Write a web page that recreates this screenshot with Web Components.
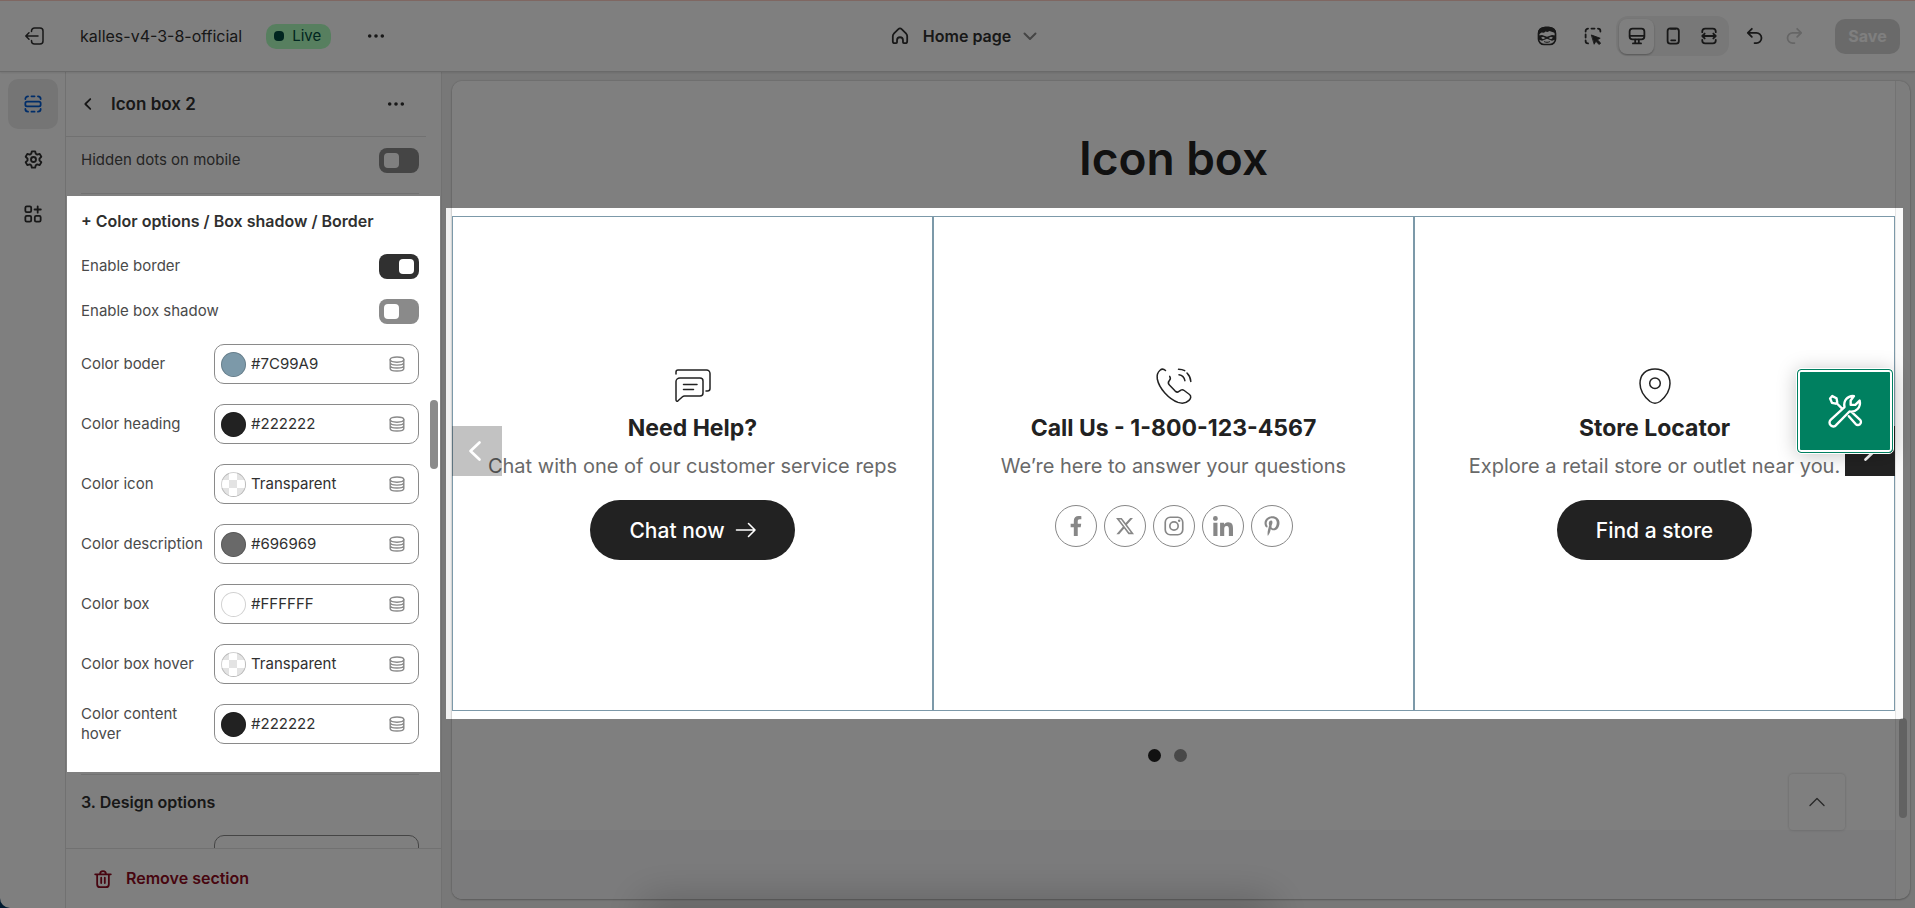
<!DOCTYPE html>
<html lang="en">
<head>
<meta charset="utf-8">
<meta name="viewport" content="width=device-width, initial-scale=1">
<title>Theme editor</title>
<style>
    body {
        margin: 0;
        background-color: #003560;
        font-family: Inter, "Liberation Sans", sans-serif;
        color: #303030;
    }
</style>
</head>
<body>

<editor-shell>
    <editor-topbar slot="top" theme="kalles-v4-3-8-official" page="Home page"></editor-topbar>
    <nav-rail slot="rail"></nav-rail>
    <settings-panel slot="side" heading="Icon box 2">
        <settings-group>
            <toggle-field label="Hidden dots on mobile"></toggle-field>
        </settings-group>
        <settings-group class="lit" heading="+ Color options / Box shadow / Border">
            <toggle-field label="Enable border" checked></toggle-field>
            <toggle-field label="Enable box shadow"></toggle-field>
            <color-field label="Color boder" value="#7C99A9"></color-field>
            <color-field label="Color heading" value="#222222"></color-field>
            <color-field label="Color icon" value="Transparent"></color-field>
            <color-field label="Color description" value="#696969"></color-field>
            <color-field label="Color box" value="#FFFFFF"></color-field>
            <color-field label="Color box hover" value="Transparent"></color-field>
            <color-field label="Color content hover" value="#222222"></color-field>
        </settings-group>
        <settings-group heading="3. Design options">
            <select-field></select-field>
        </settings-group>
    </settings-panel>
    <store-preview slot="main" heading="Icon box">
        <icon-slider class="lit" data-pad="8 8 8 6">
            <icon-card icon="chat" heading="Need Help?" text="Chat with one of our customer service reps">
                <pill-link arrow>Chat now</pill-link>
            </icon-card>
            <icon-card icon="phone" heading="Call Us - 1-800-123-4567" text="We’re here to answer your questions">
                <social-links></social-links>
            </icon-card>
            <icon-card icon="pin" heading="Store Locator" text="Explore a retail store or outlet near you.">
                <pill-link>Find a store</pill-link>
            </icon-card>
        </icon-slider>
    </store-preview>
</editor-shell>
<spot-scrim targets=".lit"></spot-scrim>

<script>
// [viewBox, markup]
const ICONS = {
    exit: ['0 0 20 20', '<path d="M6.5 5.5V5a3 3 0 0 1 3-3H15a3 3 0 0 1 3 3v10a3 3 0 0 1-3 3H9.500a3 3 0 0 1-3-3v-.5M13 10H.9M4 6.700.8 10 4 13.300"/>'],
    dots: ['0 0 20 20', '<g fill="currentColor" stroke="none"><circle cx="3" cy="10" r="2"/><circle cx="10" cy="10" r="2"/><circle cx="17" cy="10" r="2"/></g>'],
    home: ['0 0 20 20', '<path d="M2 10.200c0-1.200.5-2.300 1.400-3.200l4.500-4.400a3 3 0 0 1 4.200 0l4.500 4.400c.9.900 1.400 2 1.400 3.200v5.500a2.300 2.300 0 0 1-2.300 2.300h-1.400a1 1 0 0 1-1-1v-2.300a3.300 3.300 0 0 0-6.600 0v2.300a1 1 0 0 1-1 1H4.300A2.300 2.300 0 0 1 2 15.700z"/>'],
    down: ['0 0 20 20', '<path d="m4.500 7.500 5.500 5.500 5.500-5.500"/>'],
    up: ['0 0 20 20', '<path d="m3 13.500 7-7 7 7"/>'],
    left: ['0 0 20 20', '<path d="M12.500 4.500 7 10l5.500 5.500"/>'],
    hero: ['0 0 20 20', '<rect x="1.500" y="2" width="17" height="16.500" rx="5.500"/><path fill="currentColor" stroke="none" d="M1 9.500V6.500C1 2.500 5 .5 10 .5s9 2 9 6v3l-1.500-2.800L12.500 5l-2 1-2-.5-1.500 1.300-2.500-.3L2.500 8z"/><path fill="currentColor" fill-rule="evenodd" stroke="none" d="M1.500 9.500 5 9l5 1.700L15 9l3.500.5v4L15 14.800l-5-2-5 2-3.500-1.300zM4 11.800l2 1.500 2.500-1.300L6 10.700zM16 11.800l-2 1.500-2.500-1.300L14 10.700z"/><path stroke-width="1" d="M7.500 15.800c1.500.7 3.500.7 5 0"/>'],
    pick: ['0 0 20 20', '<path d="M1.800 5V4.500A2.700 2.700 0 0 1 4.500 1.800M8.300 1.800h3.400M15.500 1.800a2.700 2.700 0 0 1 2.700 2.700V5M1.800 8.300v3.400M1.800 15v.5a2.700 2.700 0 0 0 2.700 2.700"/><path fill="currentColor" stroke-width="1" d="m8.500 9 9.500 3.500-3.200 1.700 3.700 3.600-1.700 1.700-3.600-3.700-1.700 3z"/>'],
    desktop: ['0 0 20 20', '<rect x="1.800" y="1.800" width="16.400" height="12" rx="3.200"/><path d="M2 9.900h16M8 14v4M12 14v4M5.500 18.200h9"/>'],
    mobile: ['0 0 20 20', '<rect x="4" y="1.500" width="12.500" height="17" rx="3"/><path d="M7.500 2h5.500M8 14.800h4.500"/>'],
    wide: ['0 0 20 20', '<path d="M2.500 5.800V5a3.200 3.200 0 0 1 3.200-3.200h8.600A3.200 3.200 0 0 1 17.500 5v.8M2.500 14.200v.8a3.200 3.200 0 0 0 3.200 3.200h8.600a3.200 3.200 0 0 0 3.200-3.200v-.8M2.500 10h15M5.200 7.300 2.500 10l2.700 2.700M14.800 7.300 17.500 10l-2.700 2.700"/>'],
    undo: ['0 0 20 20', '<path d="M6.500 2 2 6.500 6.500 11M2.300 6.500h9.200a5.700 5.700 0 0 1 0 11.400H9.500"/>'],
    redo: ['0 0 20 20', '<path d="M13.500 2 18 6.500 13.500 11M17.700 6.500H8.500a5.700 5.700 0 0 0 0 11.400h2"/>'],
    sections: ['0 0 20 20', '<rect x="1.500" y="7.300" width="17" height="5.400" rx="1.800"/><path d="M1.500 4.500a3 3 0 0 1 3-3M8.300 1.500h3.400M15.500 1.500a3 3 0 0 1 3 3M1.500 15.500a3 3 0 0 0 3 3M8.300 18.500h3.400M15.500 18.500a3 3 0 0 0 3-3"/>'],
    gear: ['0 0 20 20', '<circle cx="10" cy="10" r="2.600"/><path d="M8.300 1.400h3.400l.7 2.600 1.500.9 2.600-.8 1.700 3-1.900 1.900v2l1.900 1.900-1.700 3-2.600-.8-1.500.9-.7 2.600H8.300l-.7-2.600-1.500-.9-2.600.8-1.700-3L3.700 11V9L1.800 7.100l1.700-3 2.600.8L7.600 4z"/>'],
    apps: ['0 0 20 20', '<rect x="1.500" y="1.500" width="6.500" height="6.500" rx="1.500"/><rect x="1.500" y="12" width="6.500" height="6.500" rx="1.500"/><rect x="12" y="12" width="6.500" height="6.500" rx="1.500"/><path d="M15.200 1.500v7M11.700 5h7"/>'],
    stack: ['0 0 20 20', '<ellipse cx="10" cy="4.500" rx="8.500" ry="3.200"/><path d="M1.500 4.500v11c0 1.800 3.800 3.200 8.500 3.200s8.500-1.400 8.500-3.200v-11M1.500 8.200c0 1.800 3.800 3.200 8.500 3.200s8.500-1.400 8.500-3.200M1.500 11.900c0 1.800 3.800 3.200 8.500 3.200s8.500-1.400 8.500-3.200"/>'],
    trash: ['0 0 20 20', '<path d="M1.300 4.800h17.400M6.800 4.500a3.200 3.200 0 0 1 6.400 0M3.500 5v10.700a3.300 3.300 0 0 0 3.300 3.300h6.400a3.300 3.300 0 0 0 3.300-3.300V5M8 8.500v6M12 8.500v6"/>'],
    chat: ['0 0 36 36', '<path d="M1 6V4a2 2 0 0 1 2-2h28.500A3.500 3.500 0 0 1 35 5.500v15a2.500 2.500 0 0 1-2.500 2.500H31M5 10h20a3 3 0 0 1 3 3v12a3 3 0 0 1-3 3H9.500a3 3 0 0 0-2 .8L3 32.800c-1 .8-2 .3-2-1V13.500C1 11.500 2.800 10 5 10zM8.500 16.500h13.500M8.500 21.500h10"/>'],
    phone: ['0 0 36 36', '<path d="M9.500 2.500C7.800.9 5.600.8 4 2.300 1.500 4.500.7 7.500 1.300 11c1.800 9.500 11.500 20 20.700 23.400 3.800 1.300 8 .9 11-2 2-2 2.400-4.300.5-5.900l-5.300-4c-1.600-1.200-3.300-.8-4.700.6-1.400 1.500-2.900 1.300-4.300 0l-5.800-6c-1.400-1.500-1.500-2.800-.2-4.300 1.300-1.300 1.500-2.900.5-4.400M22.500 1.200c2.400 0 4.400.4 6.200 1.500M31 5c2.400 2.500 3.700 5.500 3.800 8.500M23 6.800c3.200.5 5.300 2.600 5.900 5.900"/>'],
    pin: ['0 0 36 36', '<path d="M18 1C9 1 3 6.500 3 15.500c0 6 4.200 13.200 10 18 3 2 7 2 10 0 5.800-4.800 10-12 10-18C33 6.500 27 1 18 1z"/><circle cx="18" cy="15.200" r="5.300"/>'],
    tools: ['0 0 36 36', '<path d="M2.200 4.800 4.500 2.200 9 4.500l.8 4.200-1.600 1.600-4-1zM9 9.500l6.200 6.200M22 23.500l7.300 8.300a3.500 3.500 0 0 0 4.500.2 3.300 3.300 0 0 0 .2-4.700l-8.300-7.500M2.800 27.500l14.700-13.600C16 7.500 20.500 1.600 27.500 2.200L24 6.800v4.700h4.900L33.500 7c1.800 7-4 12.800-10.800 11.500L8.500 33a3.700 3.700 0 0 1-5.500.3 3.900 3.900 0 0 1-.2-5.800z"/>'],
    arrow: ['0 0 20 20', '<path d="M.5 10h18.500M12.500 3.500 19 10l-6.500 6.500"/>'],
    prev: ['0 0 20 20', '<path d="M15 .5 5 10l10 9.500"/>'],
    next: ['0 0 20 20', '<path d="M5 .5 15 10 5 19.500"/>'],
    facebook: ['0 0 320 512', '<path d="M279.140 288l14.220-92.660h-88.910v-60.130c0-25.350 12.420-50.060 52.240-50.060h40.420V6.260S260.430 0 225.360 0c-73.220 0-121.080 44.380-121.080 124.720v70.620H22.890V288h81.390v224h100.170V288z"/>'],
    x: ['0 0 24 24', '<path d="M18.244 2.250h3.308l-7.227 8.260 8.502 11.240H16.170l-5.214-6.817L4.990 21.750H1.680l7.730-8.835L1.254 2.250H8.080l4.713 6.231zm-1.161 17.520h1.833L7.084 4.126H5.117z"/>'],
    instagram: ['0 0 24 24', '<g fill="none" stroke="currentColor" stroke-width="2"><rect x="1.500" y="1.500" width="21" height="21" rx="6"/><circle cx="12" cy="12" r="5"/></g><circle cx="18.200" cy="5.800" r="1.500"/>'],
    linkedin: ['0 0 448 448', '<path d="M100.280 448H7.400V148.900h92.880zM53.790 108.100C24.090 108.100 0 83.500 0 53.800a53.790 53.790 0 0 1 107.580 0c0 29.700-24.100 54.300-53.790 54.300zM447.900 448h-92.680V302.400c0-34.700-.7-79.200-48.290-79.200-48.290 0-55.690 37.700-55.690 76.700V448h-92.780V148.900h89.080v40.800h1.300c12.400-23.500 42.690-48.300 87.880-48.300 94 0 111.280 61.900 111.280 142.300V448z"/>'],
    pinterest: ['0 0 384 512', '<path d="M204 6.500C101.400 6.500 0 74.900 0 185.600 0 256 39.600 296 63.600 296c9.900 0 15.600-27.600 15.600-35.400 0-9.300-23.700-29.100-23.700-67.800 0-80.400 61.200-137.400 140.400-137.400 68.100 0 118.500 38.700 118.500 109.800 0 53.100-21.300 152.700-90.300 152.700-24.900 0-46.200-18-46.200-43.800 0-37.800 26.400-74.400 26.400-113.400 0-66.200-93.900-54.200-93.900 25.800 0 16.800 2.100 35.400 9.600 50.700-13.800 59.400-42 147.900-42 209.100 0 18.900 2.700 37.500 4.500 56.400 3.400 3.800 1.700 3.400 6.900 1.500 50.400-69 48.600-82.500 71.400-172.800 12.300 23.400 44.100 36 69.300 36 106.200 0 153.900-103.500 153.900-196.800C384 71.300 298.200 6.500 204 6.500z"/>']
};

class UiIcon extends HTMLElement {
    constructor() {
        super();
        this.attachShadow({ mode: 'open' });
    }
    connectedCallback() {
        const [box, markup] = ICONS[this.getAttribute('name')];
        this.shadowRoot.innerHTML = `
        <style>
            :host {
                display: block;
                flex: none;
                width: var(--size, 18px);
                height: var(--size, 18px);
            }
            svg {
                display: block;
                width: 100%;
                height: 100%;
                overflow: visible;
                fill: none;
                stroke: currentColor;
                stroke-width: var(--stroke, 2);
                stroke-linecap: round;
                stroke-linejoin: round;
            }
            :host([solid]) svg {
                fill: currentColor;
                stroke: none;
            }
        </style>
        <svg viewBox="${box}" aria-hidden="true">${markup}</svg>`;
    }
}
customElements.define('ui-icon', UiIcon);

class EditorShell extends HTMLElement {
    constructor() {
        super();
        this.attachShadow({ mode: 'open' });
        this.shadowRoot.innerHTML = `
        <style>
            :host {
                display: grid;
                grid-template-columns: auto auto minmax(0, 1fr);
                grid-template-rows: auto minmax(0, 1fr);
                height: 100vh;
                overflow: hidden;
                background-color: #fff;
                border-bottom-left-radius: 10px;
            }
            slot[name="top"]::slotted(*) {
                grid-column: 1 / -1;
            }
        </style>
        <slot name="top"></slot>
        <slot name="rail"></slot>
        <slot name="side"></slot>
        <slot name="main"></slot>`;
    }
}
customElements.define('editor-shell', EditorShell);

class EditorTopbar extends HTMLElement {
    constructor() {
        super();
        this.attachShadow({ mode: 'open' });
    }
    connectedCallback() {
        this.shadowRoot.innerHTML = `
        <style>
            :host {
                display: grid;
                grid-template-columns: 1fr auto 1fr;
                align-items: center;
                box-sizing: border-box;
                height: 72px;
                padding: 0 15px 0 25px;
                border-top: 1px solid #ffcfc4;
                border-bottom: 1px solid #d4d4d4;
                box-shadow: 0 1px 2px rgba(0, 0, 0, .1);
                z-index: 1;
                font-size: 16px;
                line-height: 20px;
            }
            div {
                display: flex;
                align-items: center;
            }
            button {
                display: flex;
                align-items: center;
                justify-content: center;
                padding: 0;
                border: 0;
                background: none;
                color: #303030;
                font: inherit;
            }
            .tools {
                justify-content: flex-end;
            }
            .name {
                margin: 0 24px 0 35px;
            }
            .live {
                gap: 8px;
                height: 25px;
                padding: 0 10px 0 8px;
                border-radius: 10px;
                margin-right: 36px;
                background-color: #affebf;
                color: #014b40;
                font-size: 15px;
            }
            .live::before {
                content: "";
                width: 10px;
                height: 10px;
                border-radius: 4px;
                background-color: #014b40;
            }
            .page {
                gap: 14px;
                margin-left: 6px;
                font-weight: 600;
            }
            .page ui-icon:last-child {
                --size: 20px;
                margin-left: -5px;
                color: #8a8a8a;
            }
            .views {
                gap: 1px;
                height: 40px;
                padding: 0 3px;
                margin: 0 17px 0 6px;
                border-radius: 12px;
                background-color: #f1f1f1;
            }
            .views button {
                width: 35px;
                height: 35px;
                border-radius: 8px;
            }
            .views .on {
                background-color: #fff;
                box-shadow: 0 1px 2px rgba(0, 0, 0, .3);
            }
            .plain {
                width: 35px;
                height: 35px;
            }
            .hero {
                margin-right: 11px;
            }
            .redo {
                width: 40px;
                margin: 0 21px 0 10px;
                color: #ccc;
            }
            .save {
                width: 65px;
                height: 35px;
                border-radius: 10px;
                background-color: #d5d5d5;
                color: #fff;
                font-weight: 700;
            }
        </style>
        <div>
            <button aria-label="Exit"><ui-icon name="exit" style="--size: 20px; --stroke: 1.5"></ui-icon></button>
            <span class="name">${this.getAttribute('theme')}</span>
            <div class="live">Live</div>
            <button aria-label="More actions"><ui-icon name="dots"></ui-icon></button>
        </div>
        <button class="page">
            <ui-icon name="home"></ui-icon>
            ${this.getAttribute('page')}
            <ui-icon name="down"></ui-icon>
        </button>
        <div class="tools">
            <button class="plain hero" aria-label="Sidekick"><ui-icon name="hero" style="--size: 20px; --stroke: 1.7"></ui-icon></button>
            <button class="plain" aria-label="Inspector"><ui-icon name="pick"></ui-icon></button>
            <div class="views">
                <button class="on" aria-label="Desktop"><ui-icon name="desktop"></ui-icon></button>
                <button aria-label="Mobile"><ui-icon name="mobile"></ui-icon></button>
                <button aria-label="Fullscreen"><ui-icon name="wide"></ui-icon></button>
            </div>
            <button aria-label="Undo"><ui-icon name="undo"></ui-icon></button>
            <button class="redo" aria-label="Redo" disabled><ui-icon name="redo"></ui-icon></button>
            <button class="save" disabled>Save</button>
        </div>`;
    }
}
customElements.define('editor-topbar', EditorTopbar);

class NavRail extends HTMLElement {
    constructor() {
        super();
        this.attachShadow({ mode: 'open' });
        this.shadowRoot.innerHTML = `
        <style>
            :host {
                display: flex;
                flex-direction: column;
                gap: 5px;
                padding: 7px 7px 7px 8px;
                border-right: 1px solid #e3e3e3;
            }
            button {
                display: flex;
                align-items: center;
                justify-content: center;
                width: 50px;
                height: 50px;
                padding: 0;
                border: 0;
                border-radius: 10px;
                background: none;
                color: #303030;
            }
            .on {
                background-color: #ebebeb;
                color: #005bd3;
            }
        </style>
        <button class="on" aria-label="Sections"><ui-icon name="sections"></ui-icon></button>
        <button aria-label="Theme settings"><ui-icon name="gear" style="--size: 19px"></ui-icon></button>
        <button aria-label="App embeds"><ui-icon name="apps"></ui-icon></button>`;
    }
}
customElements.define('nav-rail', NavRail);

class SettingsPanel extends HTMLElement {
    constructor() {
        super();
        this.attachShadow({ mode: 'open' });
    }
    connectedCallback() {
        this.shadowRoot.innerHTML = `
        <style>
            :host {
                display: flex;
                flex-direction: column;
                width: 375px;
                border-right: 1px solid #e3e3e3;
            }
            header {
                display: flex;
                align-items: center;
                box-sizing: border-box;
                height: 65px;
                padding: 0 21px 0 13px;
                margin-right: 15px;
                border-bottom: 1px solid #e3e3e3;
            }
            h2 {
                flex: 1;
                margin: 0 0 0 14px;
                font-size: 17px;
                line-height: 24px;
                font-weight: 600;
            }
            button {
                display: flex;
                align-items: center;
                padding: 0;
                border: 0;
                background: none;
                color: #303030;
                font: inherit;
            }
            .scroll {
                position: relative;
                flex: 1;
                min-height: 0;
                overflow: hidden;
            }
            /* overlay scrollbar */
            .thumb {
                position: absolute;
                top: 37%;
                right: 3px;
                width: 8px;
                height: 69px;
                border-radius: 4px;
                background-color: #8b8b8b;
            }
            footer {
                padding: 20px 28px;
                border-top: 1px solid #e3e3e3;
            }
            footer button {
                gap: 14px;
                color: #8e0b21;
                font-size: 16px;
                line-height: 19px;
                font-weight: 600;
            }
        </style>
        <header>
            <button aria-label="Back"><ui-icon name="left"></ui-icon></button>
            <h2>${this.getAttribute('heading')}</h2>
            <button aria-label="More actions"><ui-icon name="dots"></ui-icon></button>
        </header>
        <div class="scroll">
            <slot></slot>
            <div class="thumb"></div>
        </div>
        <footer>
            <button><ui-icon name="trash"></ui-icon>Remove section</button>
        </footer>`;
    }
}
customElements.define('settings-panel', SettingsPanel);

class SettingsGroup extends HTMLElement {
    constructor() {
        super();
        this.attachShadow({ mode: 'open' });
    }
    connectedCallback() {
        const heading = this.getAttribute('heading');
        this.shadowRoot.innerHTML = `
        <style>
            :host {
                display: flex;
                flex-direction: column;
                gap: 20px;
                padding: 15px 21px 28px 14px;
                margin: 0 1px;
            }
            :host(:first-of-type) {
                padding: 11px 21px 18px 14px;
            }
            h3 {
                margin: 0 0 3px;
                font-size: 16px;
                line-height: 20px;
                font-weight: 600;
            }
        </style>
        ${heading ? `<h3>${heading}</h3>` : ''}
        <slot></slot>`;
        // divider between two groups
        if (this.nextElementSibling) {
            const line = document.createElement('hr');
            line.style.cssText = 'height: 1px; margin: 2px 22px 2px 15px; border: 0; background-color: #e3e3e3;';
            this.after(line);
        }
    }
}
customElements.define('settings-group', SettingsGroup);

class ToggleField extends HTMLElement {
    constructor() {
        super();
        this.attachShadow({ mode: 'open' });
    }
    connectedCallback() {
        this.shadowRoot.innerHTML = `
        <style>
            :host {
                display: flex;
                justify-content: space-between;
                font-size: 15px;
                line-height: 24px;
                color: #4a4a4a;
            }
            input {
                appearance: none;
                display: flex;
                box-sizing: border-box;
                width: 40px;
                height: 25px;
                padding: 5px;
                margin: 0;
                border-radius: 8px;
                background-color: #8a8a8a;
            }
            input::before {
                content: "";
                width: 15px;
                height: 15px;
                border-radius: 4px;
                background-color: #fff;
            }
            input:checked {
                justify-content: flex-end;
                background-color: #303030;
            }
        </style>
        <label for="toggle">${this.getAttribute('label')}</label>
        <input id="toggle" type="checkbox" role="switch">`;
        this.shadowRoot.querySelector('input').checked = this.hasAttribute('checked');
    }
}
customElements.define('toggle-field', ToggleField);

class ColorField extends HTMLElement {
    constructor() {
        super();
        this.attachShadow({ mode: 'open' });
    }
    connectedCallback() {
        const value = this.getAttribute('value');
        this.shadowRoot.innerHTML = `
        <style>
            :host {
                display: flex;
                align-items: center;
                gap: 5px;
                font-size: 15px;
                line-height: 20px;
                color: #4a4a4a;
            }
            label {
                flex: none;
                width: 128px;
            }
            .box {
                display: flex;
                flex: 1;
                align-items: center;
                gap: 5px;
                box-sizing: border-box;
                min-width: 0;
                height: 40px;
                padding: 0 13px 0 6px;
                border: 1px solid #8a8a8a;
                border-radius: 10px;
                background-color: #fff;
            }
            button {
                flex: none;
                padding: 0;
                border: 0;
                background: none;
                color: #8a8a8a;
            }
            .swatch {
                width: 25px;
                height: 25px;
                border-radius: 50%;
                background-color: #fff;
                box-shadow: inset 0 0 0 1px rgba(0, 0, 0, .18);
            }
            .clear {
                background: repeating-conic-gradient(#fff 0 25%, #e3e3e3 0 50%) 0 0 / 16px 16px;
            }
            input {
                flex: 1;
                min-width: 0;
                padding: 0;
                border: 0;
                background: none;
                color: #303030;
                font: inherit;
                outline: 0;
            }
        </style>
        <label for="value">${this.getAttribute('label')}</label>
        <div class="box">
            <button class="swatch" aria-label="Pick a color"></button>
            <input id="value" type="text" value="${value}">
            <button aria-label="Connect dynamic source"><ui-icon name="stack" style="--size: 16px; --stroke: 1.8"></ui-icon></button>
        </div>`;
        const swatch = this.shadowRoot.querySelector('.swatch');
        if (value === 'Transparent') {
            swatch.classList.add('clear');
        } else {
            swatch.style.backgroundColor = value;
        }
    }
}
customElements.define('color-field', ColorField);

class SelectField extends HTMLElement {
    constructor() {
        super();
        this.attachShadow({ mode: 'open' });
        this.shadowRoot.innerHTML = `
        <style>
            :host {
                display: flex;
                justify-content: flex-end;
            }
            select {
                appearance: none;
                box-sizing: border-box;
                width: 205px;
                height: 40px;
                border: 1px solid #8a8a8a;
                border-radius: 10px;
                background-color: #fff;
            }
        </style>
        <select aria-label="Design"></select>`;
    }
}
customElements.define('select-field', SelectField);

class StorePreview extends HTMLElement {
    constructor() {
        super();
        this.attachShadow({ mode: 'open' });
    }
    connectedCallback() {
        this.shadowRoot.innerHTML = `
        <style>
            :host {
                display: flex;
                padding: 9px 5px 9px 10px;
                background-color: #f1f1f1;
            }
            .frame {
                display: flex;
                flex: 1;
                position: relative;
                min-width: 0;
                border-radius: 10px;
                background-color: #fafafa;
                box-shadow: 0 0 2px rgba(0, 0, 0, .25), 0 1px 2px rgba(0, 0, 0, .2);
                overflow: hidden;
            }
            main {
                display: flex;
                flex-direction: column;
                flex: 1;
                min-width: 0;
                background-color: #fff;
            }
            h1 {
                margin: 47px 0 28px;
                color: #222;
                font-size: 46px;
                line-height: 60px;
                font-weight: 600;
                text-align: center;
            }
            .below {
                flex: 1;
                background-color: #f6f6f8;
            }
            .track {
                width: 14px;
                border-left: 1px solid #e6e6e6;
            }
            .thumb {
                position: absolute;
                right: 3px;
                bottom: 81px;
                width: 8px;
                height: 100px;
                border-radius: 4px;
                background-color: #c4c4c4;
            }
            .top {
                position: absolute;
                right: 65px;
                bottom: 69px;
                display: flex;
                align-items: center;
                justify-content: center;
                width: 56px;
                height: 56px;
                padding: 0;
                border: 0;
                border-radius: 4px;
                background-color: #fff;
                box-shadow: 0 0 3px rgba(0, 0, 0, .2);
                color: #555;
            }
            /* floating shop tools, over the slider */
            .wrench {
                position: absolute;
                top: 288px;
                right: 17px;
                display: flex;
                align-items: center;
                justify-content: center;
                width: 96px;
                height: 84px;
                padding: 0;
                border: 1px solid #008060;
                border-radius: 4px;
                outline: 1px solid #fff;
                background-color: #008060;
                box-shadow: inset 0 0 0 2px #fff, 0 2px 20px rgba(0, 0, 0, .25);
                color: #fff;
            }
        </style>
        <div class="frame">
            <main>
                <h1>${this.getAttribute('heading')}</h1>
                <slot></slot>
                <div class="below"></div>
            </main>
            <div class="track"></div>
            <button class="wrench" aria-label="Shop tools"><ui-icon name="tools" style="--size: 34px; --stroke: 2.5"></ui-icon></button>
            <button class="top" aria-label="Back to top"><ui-icon name="up" style="--size: 20px; --stroke: 1.4"></ui-icon></button>
            <div class="thumb"></div>
        </div>`;
    }
}
customElements.define('store-preview', StorePreview);

class IconSlider extends HTMLElement {
    constructor() {
        super();
        this.attachShadow({ mode: 'open' });
        this.shadowRoot.innerHTML = `
        <style>
            :host {
                display: block;
                padding-bottom: 68px;
            }
            .cards {
                position: relative;
                display: grid;
                grid-template-columns: repeat(3, 1fr);
            }
            button {
                position: absolute;
                top: 210px;
                display: flex;
                align-items: center;
                justify-content: center;
                width: 50px;
                height: 50px;
                padding: 0;
                border: 0;
                background-color: #222;
                color: #fff;
            }
            .prev {
                left: 0;
                padding-right: 4px;
                background-color: rgba(0, 0, 0, .24);
            }
            .next {
                right: 0;
            }
            .dots {
                display: flex;
                justify-content: center;
                padding-top: 38px;
            }
            .dots i {
                width: 13px;
                height: 13px;
                border-radius: 50%;
                margin-right: 13px;
                background-color: #222;
            }
            .dots i + i {
                background-color: #909090;
            }
        </style>
        <div class="cards">
            <slot></slot>
            <button class="prev" aria-label="Previous"><ui-icon name="prev" style="--stroke: 3"></ui-icon></button>
            <button class="next" aria-label="Next"><ui-icon name="next" style="--stroke: 3"></ui-icon></button>
        </div>
        <div class="dots"><i></i><i></i></div>`;
    }
    // only the row of cards is lit, not the dots
    getBoundingClientRect() {
        return this.shadowRoot.querySelector('.cards').getBoundingClientRect();
    }
}
customElements.define('icon-slider', IconSlider);

class IconCard extends HTMLElement {
    constructor() {
        super();
        this.attachShadow({ mode: 'open' });
    }
    connectedCallback() {
        this.shadowRoot.innerHTML = `
        <style>
            :host {
                display: flex;
                flex-direction: column;
                align-items: center;
                padding: 151px 0 150px;
                border: 1px solid #7c99a9;
                text-align: center;
            }
            ui-icon {
                --size: 36px;
                --stroke: 1.5;
                color: #222;
            }
            h3 {
                margin: 9px 0 8px;
                color: #222;
                font-size: 23px;
                line-height: 30px;
                font-weight: 700;
            }
            p {
                margin: 0;
                color: #696969;
                font-size: 20px;
                line-height: 30px;
            }
            .action {
                height: 60px;
                margin-top: 19px;
            }
        </style>
        <ui-icon name="${this.getAttribute('icon')}"></ui-icon>
        <h3>${this.getAttribute('heading')}</h3>
        <p>${this.getAttribute('text')}</p>
        <div class="action"><slot></slot></div>`;
    }
}
customElements.define('icon-card', IconCard);

class PillLink extends HTMLElement {
    constructor() {
        super();
        this.attachShadow({ mode: 'open' });
    }
    connectedCallback() {
        this.shadowRoot.innerHTML = `
        <style>
            :host {
                display: block;
            }
            a {
                display: flex;
                align-items: center;
                gap: 11px;
                height: 60px;
                padding: 0 39px;
                border-radius: 30px;
                background-color: #222;
                color: #fff;
                font-size: 21px;
                font-weight: 500;
                text-decoration: none;
            }
        </style>
        <a href="#"><slot></slot>${this.hasAttribute('arrow') ? '<ui-icon name="arrow" style="--size: 20px; --stroke: 1.6"></ui-icon>' : ''}</a>`;
    }
}
customElements.define('pill-link', PillLink);

class SocialLinks extends HTMLElement {
    constructor() {
        super();
        this.attachShadow({ mode: 'open' });
        const names = ['facebook', 'x', 'instagram', 'linkedin', 'pinterest'];
        this.shadowRoot.innerHTML = `
        <style>
            :host {
                display: flex;
                gap: 7px;
                padding-top: 5px;
            }
            a {
                display: flex;
                align-items: center;
                justify-content: center;
                box-sizing: border-box;
                width: 42px;
                height: 42px;
                border: 1px solid #878787;
                border-radius: 50%;
                color: #878787;
            }
        </style>
        ${names.map(n => `<a href="#" aria-label="${n}"><ui-icon name="${n}" solid style="--size: 20px"></ui-icon></a>`).join('')}`;
    }
}
customElements.define('social-links', SocialLinks);

// Dark layer over the whole window with a hole for each lit element
class SpotScrim extends HTMLElement {
    constructor() {
        super();
        this.attachShadow({ mode: 'open' });
        this.shadowRoot.innerHTML = `
        <style>
            :host {
                display: block;
                position: fixed;
                inset: 0;
                z-index: 10;
                overflow: hidden;
                pointer-events: none;
            }
            svg {
                display: block;
                width: 100%;
                height: 100%;
            }
            /* soft shade at the bottom edge */
            :host::after {
                content: "";
                position: absolute;
                top: 100%;
                left: 34%;
                right: 34%;
                height: 20px;
                box-shadow: 0 0 40px 10px rgba(0, 0, 0, .2);
            }
        </style>
        <svg aria-hidden="true"><path fill="#000" fill-opacity=".5" fill-rule="evenodd"/></svg>`;
        this.draw = this.draw.bind(this);
    }
    connectedCallback() {
        window.addEventListener('resize', this.draw);
        this.draw();
    }
    disconnectedCallback() {
        window.removeEventListener('resize', this.draw);
    }
    draw() {
        let d = `M0 0H${innerWidth}V${innerHeight}H0Z`;
        document.querySelectorAll(this.getAttribute('targets')).forEach(el => {
            const r = el.getBoundingClientRect();
            const [t, right, b, l] = (el.dataset.pad || '0 0 0 0').split(' ').map(Number);
            d += `M${Math.round(r.left - l)} ${Math.round(r.top - t)}H${Math.round(r.right + right)}V${Math.round(r.bottom + b)}H${Math.round(r.left - l)}Z`;
        });
        this.shadowRoot.querySelector('path').setAttribute('d', d);
    }
}
customElements.define('spot-scrim', SpotScrim);
</script>
</body>
</html>
